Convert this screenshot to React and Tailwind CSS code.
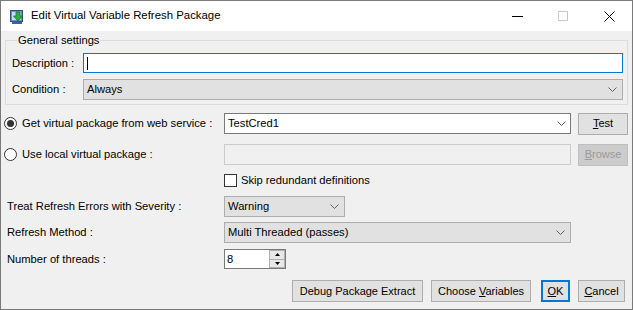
import React from "react";

const F = { fontFamily: '"Liberation Sans", Arial, sans-serif' };

function Chevron({ color = "#606060" }) {
  return (
    <svg width="9" height="5" viewBox="0 0 9 5" className="shrink-0">
      <path d="M0.5 0.5 L4.5 4.5 L8.5 0.5" fill="none" stroke={color} strokeWidth="1" />
    </svg>
  );
}

function Radio({ checked }) {
  return (
    <div className="w-[13px] h-[13px] rounded-full border border-[#333333] bg-white flex items-center justify-center shrink-0">
      {checked && <div className="w-[7px] h-[7px] rounded-full bg-[#333333]" />}
    </div>
  );
}

function Btn({ children, className = "" }) {
  return (
    <div
      className={
        "h-[22px] flex items-center justify-center border border-[#adadad] bg-[#e1e1e1] text-[11px] text-black " +
        className
      }
    >
      {children}
    </div>
  );
}

function TitleIcon() {
  return (
    <svg width="16" height="16" viewBox="0 0 16 16">
      <rect x="1.5" y="1.5" width="12" height="11" fill="#6f8fbf" stroke="#2f4f8f" />
      <rect x="3" y="3" width="9" height="8" fill="#c9d8ee" />
      <rect x="3" y="12.5" width="10" height="2.5" fill="#3f5f9f" />
      <path d="M7 3 H11 V7 H13.5 L9 12 L4.5 7 H7 Z" fill="#2fae3f" stroke="#1a7a26" strokeWidth="0.8" />
    </svg>
  );
}

export default function App() {
  return (
    <div
      className="w-[633px] h-[310px] border border-[#7a7a7a] bg-[#f0f0f0] flex flex-col overflow-hidden text-black"
      style={F}
    >
      {/* Title bar */}
      <div className="h-[30px] bg-white flex items-center shrink-0">
        <div className="ml-[8px] mt-[1px]">
          <TitleIcon />
        </div>
        <div className="ml-[6px] text-[11.4px] leading-none">
          Edit Virtual Variable Refresh Package
        </div>
        <div className="flex-1" />
        <div className="w-[11px] h-[1px] bg-black mr-[35px]" />
        <div className="w-[10px] h-[10px] border border-[#c8c8c8] mr-[36px]" />
        <svg width="11" height="11" viewBox="0 0 11 11" className="mr-[17px]">
          <path d="M0.5 0.5 L10.5 10.5 M10.5 0.5 L0.5 10.5" stroke="#000" strokeWidth="1" />
        </svg>
      </div>

      {/* Body */}
      <div className="flex-1 flex flex-col text-[11.2px]">
        <fieldset className="ml-[4px] mt-[3px] w-[623px] border border-[#dcdcdc] pl-[6px] pr-[4px] pb-[4px]">
          <legend className="ml-[5px] px-[1px] leading-[13px]">General settings</legend>
          <div className="flex items-center mt-[6px] h-[20px]">
            <div className="w-[71px]">Description :</div>
            <div className="w-[540px] h-[20px] border border-[#0078d7] bg-white flex items-center pl-[3px]">
              <div className="w-[1px] h-[13px] bg-black" />
            </div>
          </div>
          <div className="flex items-center mt-[6px] h-[21px]">
            <div className="w-[71px]">Condition :</div>
            <div className="w-[540px] h-[21px] border border-[#adadad] bg-[#e1e1e1] flex items-center pl-[3px] pr-[5px]">
              <span className="flex-1">Always</span>
              <Chevron />
            </div>
          </div>
        </fieldset>

        {/* Row 1 */}
        <div className="flex items-center h-[21px] mt-[8px]">
          <div className="w-[223px] flex items-center pl-[3px]">
            <Radio checked />
            <span className="ml-[5px]">Get virtual package from web service :</span>
          </div>
          <div className="w-[347px] h-[21px] border border-[#7a7a7a] bg-white flex items-center pl-[3px] pr-[4px]">
            <span className="flex-1">TestCred1</span>
            <Chevron />
          </div>
          <Btn className="ml-[7px] w-[50px]">
            <span><span className="underline">T</span>est</span>
          </Btn>
        </div>

        {/* Row 2 */}
        <div className="flex items-center h-[21px] mt-[10px]">
          <div className="w-[223px] flex items-center pl-[3px]">
            <Radio />
            <span className="ml-[5px]">Use local virtual package :</span>
          </div>
          <div className="w-[347px] h-[21px] border border-[#cccccc] bg-[#f0f0f0]" />
          <div className="ml-[7px] w-[50px] h-[22px] flex items-center justify-center border border-[#bfbfbf] bg-[#cccccc] text-[#9a9a9a] text-[11px]">
            <span><span className="underline">B</span>rowse</span>
          </div>
        </div>

        {/* Row 3 checkbox */}
        <div className="flex items-center h-[13px] mt-[9px]">
          <div className="w-[223px]" />
          <div className="w-[13px] h-[13px] border border-[#333333] bg-white" />
          <span className="ml-[4px]">Skip redundant definitions</span>
        </div>

        {/* Row 4 */}
        <div className="flex items-center h-[21px] mt-[9px]">
          <div className="w-[223px] pl-[6px]">Treat Refresh Errors with Severity :</div>
          <div className="w-[121px] h-[21px] border border-[#adadad] bg-[#e1e1e1] flex items-center pl-[3px] pr-[5px]">
            <span className="flex-1">Warning</span>
            <Chevron />
          </div>
        </div>

        {/* Row 5 */}
        <div className="flex items-center h-[21px] mt-[5px]">
          <div className="w-[223px] pl-[6px]">Refresh Method :</div>
          <div className="w-[347px] h-[21px] border border-[#adadad] bg-[#e1e1e1] flex items-center pl-[3px] pr-[5px]">
            <span className="flex-1">Multi Threaded (passes)</span>
            <Chevron />
          </div>
        </div>

        {/* Row 6 */}
        <div className="flex items-center h-[20px] mt-[6px]">
          <div className="w-[223px] pl-[6px]">Number of threads :</div>
          <div className="w-[62px] h-[20px] border border-[#7a7a7a] bg-white flex items-center">
            <span className="flex-1 pl-[2px]">8</span>
            <div className="w-[16px] h-[18px] flex flex-col">
              <div className="flex-1 border border-[#adadad] bg-[#e8e8e8] flex items-center justify-center">
                <svg width="5" height="3" viewBox="0 0 5 3"><path d="M0 3 L2.5 0 L5 3 Z" fill="#000" /></svg>
              </div>
              <div className="flex-1 border border-t-0 border-[#adadad] bg-[#e8e8e8] flex items-center justify-center">
                <svg width="5" height="3" viewBox="0 0 5 3"><path d="M0 0 L2.5 3 L5 0 Z" fill="#000" /></svg>
              </div>
            </div>
          </div>
        </div>

        {/* Buttons */}
        <div className="flex items-center justify-end h-[22px] mt-[11px] pr-[7px]">
          <Btn className="w-[131px]">Debug Package Extract</Btn>
          <Btn className="ml-[8px] w-[100px]">
            <span>Choose <span className="underline">V</span>ariables</span>
          </Btn>
          <div className="ml-[10px] w-[29px] h-[22px] flex items-center justify-center border-2 border-[#0078d7] bg-[#e1e1e1] text-[11px]">
            <span><span className="underline">O</span>K</span>
          </div>
          <Btn className="ml-[8px] w-[47px]">
            <span><span className="underline">C</span>ancel</span>
          </Btn>
        </div>
      </div>
    </div>
  );
}
